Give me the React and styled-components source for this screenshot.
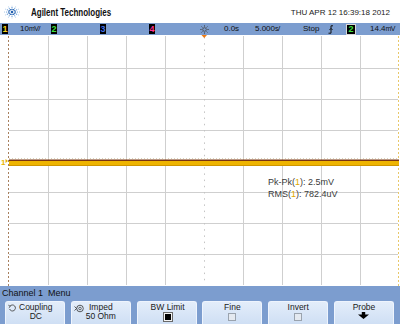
import React from "react";
import styled, { createGlobalStyle } from "styled-components";

const GlobalStyle = createGlobalStyle`
  body {
    margin: 0;
    background: #fff;
    font-family: "Liberation Sans", Arial, sans-serif;
  }
`;

const BAR_BLUE = "#7c9dcf";

const Screen = styled.div`
  width: 400px;
  height: 324px;
  display: flex;
  flex-direction: column;
  overflow: hidden;
  background: #fff;
`;

const Header = styled.div`
  height: 23px;
  display: flex;
  align-items: center;
  padding: 0 10px 0 4px;
`;

const Brand = styled.span`
  display: inline-block;
  margin-left: 11px;
  margin-top: 1px;
  font-weight: bold;
  font-size: 10.8px;
  color: #111;
  transform: scaleX(0.74);
  transform-origin: left center;
  white-space: nowrap;
`;

const DateText = styled.span`
  margin-left: auto;
  margin-top: 2px;
  font-size: 8px;
  color: #222;
`;

const StatusBar = styled.div`
  height: 12px;
  background: ${BAR_BLUE};
  display: flex;
  align-items: center;
  font-size: 8px;
  color: #111;
  line-height: 12px;
  white-space: nowrap;
`;

const Cell = styled.div`
  width: ${(p) => p.$w}px;
  padding-left: ${(p) => p.$pl || 0}px;
  box-sizing: border-box;
  display: flex;
  align-items: center;
  flex-shrink: 0;
`;

const ChanBox = styled.span`
  width: 6px;
  height: 10px;
  background: #000;
  color: ${(p) => p.$color};
  font-weight: bold;
  font-size: 9px;
  line-height: 10px;
  text-align: center;
`;

const TrigBox = styled.span`
  width: 8px;
  height: 9px;
  background: #000;
  border: 1px solid #d8d8d8;
  color: #3ee03e;
  font-weight: bold;
  font-size: 9px;
  line-height: 9px;
  text-align: center;
`;

const Unit = styled.span`
  font-size: 7px;
  letter-spacing: -0.6px;
`;

const ChanLabel = styled.span`
  margin-left: 12px;
`;

const Display = styled.div`
  position: relative;
  height: 251px;
  flex-shrink: 0;
`;

const Measurements = styled.div`
  position: absolute;
  left: 268px;
  top: 142px;
  font-size: 9px;
  line-height: 11.5px;
  color: #3a3a3a;
  white-space: nowrap;
`;

const Amber = styled.span`
  color: #e0a800;
`;

const Menu = styled.div`
  flex: 1;
  background: ${BAR_BLUE};
  display: flex;
  flex-direction: column;
`;

const MenuTitle = styled.div`
  height: 15px;
  padding-left: 2px;
  font-size: 9px;
  line-height: 14px;
  color: #111;
  white-space: pre;
`;

const ButtonRow = styled.div`
  display: flex;
  justify-content: space-between;
  padding: 0 6px 0 5px;
`;

const SoftKey = styled.div`
  width: 60px;
  height: 23px;
  box-sizing: border-box;
  border: 1px solid #eef4fd;
  border-bottom: none;
  border-radius: 3px 3px 0 0;
  background: linear-gradient(#e3edfa, #cfdff4);
  display: grid;
  grid-template-columns: 13px 1fr 13px;
  font-size: 8.5px;
  line-height: 9px;
  color: #1a1a1a;
`;

const KeyIcon = styled.div`
  padding: 2px 0 0 2px;
`;

const KeyText = styled.div`
  display: flex;
  flex-direction: column;
  align-items: center;
  padding-top: 1px;
  white-space: nowrap;
`;

const CheckBox = styled.span`
  margin-top: 1px;
  width: 8px;
  height: 8px;
  box-sizing: border-box;
  border: 1px solid ${(p) => (p.$checked ? "#f4f4f4" : "#9aa3ae")};
  background: ${(p) => (p.$checked ? "#000" : "#e4e9f0")};
  outline: ${(p) => (p.$checked ? "1px solid #6a6a6a" : "none")};
`;

const AgilentLogo = () => {
  const dots = [];
  for (let i = 0; i < 12; i++) {
    const a = (i * Math.PI) / 6;
    const sx = 1.25;
    [2.6, 4.3, 5.9].forEach((r, j) => {
      dots.push(
        <circle
          key={i + "-" + j}
          cx={8 + Math.cos(a) * r * sx}
          cy={7 + Math.sin(a) * r}
          r={0.75 - j * 0.17}
          fill={j === 0 ? "#1f5fb0" : "#4a8ad0"}
        />
      );
    });
  }
  return (
    <svg width="16" height="14" viewBox="0 0 16 14">
      <circle cx="8" cy="7" r="1.3" fill="#1f5fb0" />
      {dots}
    </svg>
  );
};

const SunIcon = () => (
  <svg width="9" height="9" viewBox="0 0 9 9">
    <circle cx="4.5" cy="4.5" r="1.8" fill="none" stroke="#444" strokeWidth="0.8" />
    {[0, 45, 90, 135, 180, 225, 270, 315].map((d) => {
      const a = (d * Math.PI) / 180;
      return (
        <line
          key={d}
          x1={4.5 + Math.cos(a) * 2.8}
          y1={4.5 + Math.sin(a) * 2.8}
          x2={4.5 + Math.cos(a) * 4.3}
          y2={4.5 + Math.sin(a) * 4.3}
          stroke="#444"
          strokeWidth="0.8"
        />
      );
    })}
  </svg>
);

const EdgeIcon = () => (
  <svg width="5" height="9" viewBox="0 0 5 9">
    <path d="M5 0.8 H3 V8.2 H0.5" fill="none" stroke="#111" strokeWidth="1" />
    <path d="M1.4 5 L3 3.4 L4.6 5" fill="none" stroke="#111" strokeWidth="0.9" />
  </svg>
);

const CouplingIcon = () => (
  <svg width="9" height="8" viewBox="0 0 9 8">
    <path d="M2 2.2 A3 3 0 1 1 1.6 5" fill="none" stroke="#333" strokeWidth="0.8" />
    <path d="M0.4 1.2 L2.3 2.4 L0.8 3.8" fill="none" stroke="#333" strokeWidth="0.8" />
  </svg>
);

const ImpedIcon = () => (
  <svg width="11" height="9" viewBox="0 0 11 9">
    <circle cx="6" cy="4.5" r="3.3" fill="none" stroke="#333" strokeWidth="0.8" />
    <circle cx="6" cy="4.5" r="1.3" fill="none" stroke="#333" strokeWidth="0.7" />
    <path d="M0.5 2.5 L2.6 4.5 L0.5 6.5" fill="none" stroke="#333" strokeWidth="0.8" />
  </svg>
);

const ProbeArrow = () => (
  <svg width="11" height="7" viewBox="0 0 11 7">
    <path d="M3.8 0 H7.2 V2.6 H11 L5.5 7 L0 2.6 H3.8 Z" fill="#000" />
  </svg>
);

const Graticule = () => {
  const vx = [48, 87, 126, 165, 243, 282, 321, 360];
  const hy = [33, 64, 95, 157, 188, 219];
  return (
    <svg width="400" height="251" viewBox="0 0 400 251">
      {vx.map((x) => (
        <line key={"v" + x} x1={x + 0.5} y1="1" x2={x + 0.5} y2="250" stroke="#cfcfcf" />
      ))}
      {hy.map((y) => (
        <line key={"h" + y} x1="9" y1={y + 0.5} x2="398" y2={y + 0.5} stroke="#cfcfcf" />
      ))}
      <line x1="204.5" y1="2" x2="204.5" y2="250" stroke="#c4c4c4" strokeDasharray="1.5 4.7" />
      <line x1="9" y1="123.5" x2="398" y2="123.5" stroke="#d8d2bc" strokeDasharray="1 2" />
      <line x1="8.5" y1="1" x2="8.5" y2="251" stroke="#a8805e" strokeDasharray="2 2" />
      <line x1="398.5" y1="1" x2="398.5" y2="251" stroke="#e8c86a" strokeDasharray="2 2" />
      <polygon points="201.5,0 207,0 204.2,3" fill="#f07a10" />
      <rect x="9" y="124.5" width="390" height="1.5" fill="#7a3410" />
      <rect x="9" y="126" width="390" height="4" fill="#eeb400" />
      <rect x="9" y="130" width="390" height="1" fill="#cf9600" />
      <text x="1" y="130" fontSize="8" fontWeight="bold" fill="#e8b400" fontFamily="Liberation Sans, Arial, sans-serif">
        1
      </text>
      <polygon points="5.5,124 8,126 5.5,128" fill="#e8b400" />
    </svg>
  );
};

const channels = [
  { n: "1", color: "#f2d21a", label: true },
  { n: "2", color: "#3ee03e" },
  { n: "3", color: "#3f6fe8" },
  { n: "4", color: "#ff2f8e" },
];

const App = () => {
  return (
    <Screen>
      <GlobalStyle />
      <Header>
        <AgilentLogo />
        <Brand>Agilent Technologies</Brand>
        <DateText>THU APR 12 16:39:18 2012</DateText>
      </Header>
      <StatusBar>
        {channels.map((c) => (
          <Cell key={c.n} $w={49} $pl={2}>
            <ChanBox $color={c.color}>{c.n}</ChanBox>
            {c.label && (
              <ChanLabel>
                10<Unit>mV</Unit>/
              </ChanLabel>
            )}
          </Cell>
        ))}
        <Cell $w={24} $pl={4}>
          <SunIcon />
        </Cell>
        <Cell $w={31} $pl={4}>0.0s</Cell>
        <Cell $w={47} $pl={4}>
          5.000<Unit>s</Unit>/
        </Cell>
        <Cell $w={26} $pl={5}>Stop</Cell>
        <Cell $w={18} $pl={4}>
          <EdgeIcon />
        </Cell>
        <Cell $w={24} $pl={4}>
          <TrigBox>2</TrigBox>
        </Cell>
        <Cell $w={34} $pl={4}>
          14.4<Unit>mV</Unit>
        </Cell>
      </StatusBar>
      <Display>
        <Graticule />
        <Measurements>
          <div>
            Pk-Pk(<Amber>1</Amber>): 2.5mV
          </div>
          <div>
            RMS(<Amber>1</Amber>): 782.4uV
          </div>
        </Measurements>
      </Display>
      <Menu>
        <MenuTitle>Channel 1  Menu</MenuTitle>
        <ButtonRow>
          <SoftKey>
            <KeyIcon>
              <CouplingIcon />
            </KeyIcon>
            <KeyText>
              <span>Coupling</span>
              <span>DC</span>
            </KeyText>
          </SoftKey>
          <SoftKey>
            <KeyIcon>
              <ImpedIcon />
            </KeyIcon>
            <KeyText>
              <span>Imped</span>
              <span>50 Ohm</span>
            </KeyText>
          </SoftKey>
          <SoftKey>
            <span />
            <KeyText>
              <span>BW Limit</span>
              <CheckBox $checked />
            </KeyText>
          </SoftKey>
          <SoftKey>
            <span />
            <KeyText>
              <span>Fine</span>
              <CheckBox />
            </KeyText>
          </SoftKey>
          <SoftKey>
            <span />
            <KeyText>
              <span>Invert</span>
              <CheckBox />
            </KeyText>
          </SoftKey>
          <SoftKey>
            <span />
            <KeyText>
              <span>Probe</span>
              <ProbeArrow />
            </KeyText>
          </SoftKey>
        </ButtonRow>
      </Menu>
    </Screen>
  );
};

export default App;
